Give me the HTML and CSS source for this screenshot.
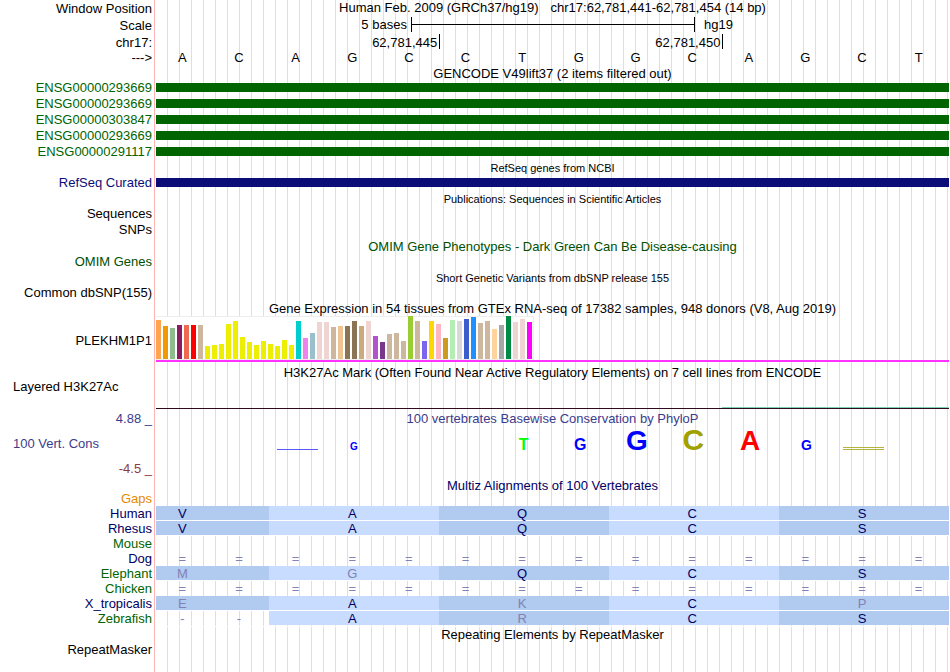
FILE: index.html
```
<!DOCTYPE html>
<html lang="en">
<head>
    <meta charset="UTF-8">
    <meta name="viewport" content="width=device-width, initial-scale=1.0">
    <title>Human chr17:62,781,441-62,781,454 Genome Browser</title>
    <link rel="stylesheet" href="styles.css">
</head>
<body>

<main class="browser">
    <!-- Ruler -->
    <div class="row ruler">
        <div class="label">Window Position</div>
        <div class="track position"><span>Human Feb. 2009 (GRCh37/hg19)</span><span>chr17:62,781,441-62,781,454 (14 bp)</span></div>
    </div>
    <div class="row ruler">
        <div class="label">Scale</div>
        <div class="track scale">
            <span class="scale-size">5 bases</span>
            <span class="scale-bar"></span>
            <span class="scale-db">hg19</span>
        </div>
    </div>
    <div class="row ruler">
        <div class="label">chr17:</div>
        <div class="track ticks">
            <span class="tick">62,781,445</span>
            <span class="tick">62,781,450</span>
        </div>
    </div>
    <div class="row bases-row">
        <div class="label">---&gt;</div>
        <div class="track bases">
            <span>A</span><span>C</span><span>A</span><span>G</span><span>C</span><span>C</span><span>T</span>
            <span>G</span><span>G</span><span>C</span><span>A</span><span>G</span><span>C</span><span>T</span>
        </div>
    </div>

    <!-- Genes -->
    <div class="row short">
        <div class="track title">GENCODE V49lift37 (2 items filtered out)</div>
    </div>
    <div class="row gencode">
        <div class="label">ENSG00000293669</div>
        <div class="track"><div class="gene"></div></div>
    </div>
    <div class="row gencode">
        <div class="label">ENSG00000293669</div>
        <div class="track"><div class="gene"></div></div>
    </div>
    <div class="row gencode">
        <div class="label">ENSG00000303847</div>
        <div class="track"><div class="gene"></div></div>
    </div>
    <div class="row gencode">
        <div class="label">ENSG00000293669</div>
        <div class="track"><div class="gene"></div></div>
    </div>
    <div class="row gencode">
        <div class="label">ENSG00000291117</div>
        <div class="track"><div class="gene"></div></div>
    </div>
    <div class="row short">
        <div class="track title small">RefSeq genes from NCBI</div>
    </div>
    <div class="row refseq">
        <div class="label">RefSeq Curated</div>
        <div class="track"><div class="gene"></div></div>
    </div>

    <!-- Literature and variants -->
    <div class="row short">
        <div class="track title small">Publications: Sequences in Scientific Articles</div>
    </div>
    <div class="row">
        <div class="label">Sequences</div>
    </div>
    <div class="row">
        <div class="label">SNPs</div>
    </div>
    <div class="row omim">
        <div class="track title">OMIM Gene Phenotypes - Dark Green Can Be Disease-causing</div>
    </div>
    <div class="row short omim">
        <div class="label">OMIM Genes</div>
    </div>
    <div class="row">
        <div class="track title small">Short Genetic Variants from dbSNP release 155</div>
    </div>
    <div class="row short">
        <div class="label">Common dbSNP(155)</div>
    </div>

    <!-- GTEx expression -->
    <div class="row">
        <div class="track title">Gene Expression in 54 tissues from GTEx RNA-seq of 17382 samples, 948 donors (V8, Aug 2019)</div>
    </div>
    <div class="row gtex">
        <div class="label">PLEKHM1P1</div>
        <div class="track gtex-track">
            <div class="gtex-chart" id="gtexChart"></div>
        </div>
    </div>

    <!-- Regulation -->
    <div class="row">
        <div class="track title">H3K27Ac Mark (Often Found Near Active Regulatory Elements) on 7 cell lines from ENCODE</div>
    </div>
    <div class="row histone">
        <div class="label label-left">Layered H3K27Ac</div>
        <div class="track"><div class="signal"></div></div>
    </div>

    <!-- Conservation -->
    <div class="row phylop">
        <div class="label axis">
            <span>4.88 _</span>
            <span class="axis-name">100 Vert. Cons</span>
            <span class="axis-min">-4.5 _</span>
        </div>
        <div class="track">
            <div class="phylop-title">100 vertebrates Basewise Conservation by PhyloP</div>
            <div class="logo">
                <span></span>
                <span></span>
                <span><i class="mark mark-g"></i></span>
                <span class="g size-10">G</span>
                <span></span>
                <span></span>
                <span class="t size-16">T</span>
                <span class="g size-16">G</span>
                <span class="g size-28">G</span>
                <span class="c size-30">C</span>
                <span class="a size-28">A</span>
                <span class="g size-14">G</span>
                <span><i class="mark mark-c"></i></span>
                <span></span>
            </div>
        </div>
    </div>
    <div class="row short multiz">
        <div class="track title">Multiz Alignments of 100 Vertebrates</div>
    </div>
    <div class="row gaps">
        <div class="label">Gaps</div>
    </div>
    <div class="row short multiz">
        <div class="label">Human</div>
        <div class="track codons">
            <span class="codon first">V</span><span class="codon light">A</span><span class="codon">Q</span><span class="codon light">C</span><span class="codon">S</span>
        </div>
    </div>
    <div class="row short multiz">
        <div class="label">Rhesus</div>
        <div class="track codons">
            <span class="codon first">V</span><span class="codon light">A</span><span class="codon">Q</span><span class="codon light">C</span><span class="codon">S</span>
        </div>
    </div>
    <div class="row short multiz other">
        <div class="label">Mouse</div>
    </div>
    <div class="row short multiz">
        <div class="label">Dog</div>
        <div class="track bases missing">
            <span>=</span><span>=</span><span>=</span><span>=</span><span>=</span><span>=</span><span>=</span>
            <span>=</span><span>=</span><span>=</span><span>=</span><span>=</span><span>=</span><span>=</span>
        </div>
    </div>
    <div class="row short multiz other">
        <div class="label">Elephant</div>
        <div class="track codons">
            <span class="codon first diff">M</span><span class="codon light diff">G</span><span class="codon">Q</span><span class="codon light">C</span><span class="codon">S</span>
        </div>
    </div>
    <div class="row short multiz other">
        <div class="label">Chicken</div>
        <div class="track bases missing">
            <span>=</span><span>=</span><span>=</span><span>=</span><span>=</span><span>=</span><span>=</span>
            <span>=</span><span>=</span><span>=</span><span>=</span><span>=</span><span>=</span><span>=</span>
        </div>
    </div>
    <div class="row short multiz">
        <div class="label">X_tropicalis</div>
        <div class="track codons">
            <span class="codon first diff">E</span><span class="codon light">A</span><span class="codon diff">K</span><span class="codon light">C</span><span class="codon diff">P</span>
        </div>
    </div>
    <div class="row short multiz other">
        <div class="label">Zebrafish</div>
        <div class="track codons">
            <span class="gap">-</span><span class="gap">-</span><span class="codon light">A</span><span class="codon diff">R</span><span class="codon light">C</span><span class="codon">S</span>
        </div>
    </div>

    <!-- Repeats -->
    <div class="row">
        <div class="track title">Repeating Elements by RepeatMasker</div>
    </div>
    <div class="row short">
        <div class="label">RepeatMasker</div>
    </div>
</main>

<script>
    // [bar height, tissue color]
    const tissues = [
        [39, '#ffa54f'], [33, '#ee9a00'], [31, '#8fbc8f'], [34, '#8b1c62'], [34, '#ee6a50'], [34, '#ff0000'],
        [34, '#cdb79e'], [13, '#eeee00'], [14, '#eeee00'], [15, '#eeee00'], [35, '#eeee00'], [38, '#eeee00'],
        [22, '#eeee00'], [17, '#eeee00'], [14, '#eeee00'], [18, '#eeee00'], [15, '#eeee00'], [13, '#eeee00'],
        [19, '#eeee00'], [14, '#eeee00'], [38, '#00cdcd'], [21, '#ee82ee'], [26, '#9ac0cd'], [37, '#eed5d2'],
        [37, '#eed5d2'], [32, '#cdb79e'], [33, '#eec591'], [33, '#8b7355'], [38, '#8b7355'], [33, '#cdaa7d'],
        [38, '#eed5d2'], [23, '#b452cd'], [17, '#7a378b'], [25, '#cdb79e'], [26, '#cdb79e'], [18, '#cdb79e'],
        [43, '#9acd32'], [38, '#cdb79e'], [18, '#7a67ee'], [38, '#ffd700'], [35, '#ffb6c1'], [21, '#cd9b1d'],
        [39, '#b4eeb4'], [38, '#d9d9d9'], [40, '#3a5fcd'], [42, '#1e90ff'], [36, '#cdb79e'], [38, '#cdb79e'],
        [30, '#ffd39b'], [34, '#a6a6a6'], [43, '#008b45'], [37, '#eed5d2'], [40, '#eed5d2'], [37, '#ff00ff']
    ];
    const gtexChart = document.getElementById('gtexChart');

    tissues.forEach(([height, color]) => {
        const bar = document.createElement('div');
        bar.className = 'bar';
        bar.style.height = height + 'px';
        bar.style.backgroundColor = color;
        gtexChart.appendChild(bar);
    });
</script>

</body>
</html>
```
FILE: styles.css
```
* {
    box-sizing: border-box;
}
body {
    margin: 0;
    font-family: "Liberation Sans", Arial, sans-serif;
    font-size: 13px;
    color: #000;
    background-color: #fff;
}
/* label column with its red edge, then a guideline every 12px */
.browser {
    min-height: 100vh;
    padding-right: 1px;
    background-image:
        linear-gradient(to right, #fff 154px, #ffb4b4 154px, #ffb4b4 155px, #fff 155px),
        linear-gradient(to right, #dcdcf8 1px, transparent 1px);
    background-size: 156px 100%, 12px 100%;
    background-position: 0 0, 11px 0;
    background-repeat: no-repeat, repeat;
}
.row {
    display: grid;
    grid-template-columns: 156px minmax(0, 1fr);
    height: 16px;
    line-height: 16px;
    white-space: nowrap;
}
.short {
    height: 15px;
    line-height: 15px;
}
.label {
    grid-column: 1;
    padding-right: 4px;
    text-align: right;
}
.label-left {
    padding-left: 13px;
    text-align: left;
}
.track {
    grid-column: 2;
    min-width: 0;
}
.title {
    padding-top: 1px;
    text-align: center;
}
.small {
    font-size: 11px;
}

/* ruler */
.ruler {
    height: 17px;
    line-height: 17px;
}
.position {
    display: flex;
    justify-content: center;
    gap: 12px;
    line-height: 16px;
}
.scale {
    display: grid;
    grid-template-columns: 9fr 10fr 9fr;
    line-height: 16px;
}
.scale-size {
    padding-right: 4px;
    text-align: right;
}
.scale-bar {
    height: 15px;
    margin-right: -1px;
    border: solid #000;
    border-width: 0 1px;
    background: linear-gradient(#000, #000) center / 100% 1px no-repeat;
}
.scale-db {
    padding-left: 10px;
}
.ticks {
    display: grid;
    grid-template-columns: 5fr 5fr 4fr;
}
.tick {
    height: 15px;
    margin-right: -1px;
    padding-right: 2px;
    border-right: 1px solid #000;
    text-align: right;
}
.bases-row {
    height: 14px;
    line-height: 13px;
}
.bases,
.logo {
    display: grid;
    grid-template-columns: repeat(14, minmax(0, 1fr));
    text-align: center;
}
.bases span {
    padding-right: 4px;
}

/* genes */
.gencode {
    color: #006400;
}
.refseq {
    color: #0c0c78;
}
.gene {
    height: 9px;
    margin-top: 3px;
    background-color: currentColor;
}
.omim {
    color: #005000;
}

/* expression */
.gtex {
    height: 48px;
    line-height: 50px;
}
.gtex-track {
    height: 46px;
    border-bottom: 2px solid #ff32ff;
}
.gtex-chart {
    display: flex;
    align-items: flex-end;
    gap: 2px;
    width: max-content;
    height: 44px;
    padding-right: 1px;
    background-color: #fff;
    border: solid #eee;
    border-width: 0 1px 1px 0;
    box-shadow: inset 0 1px #eee;
}
.bar {
    width: 5px;
}

/* histone marks */
.histone {
    height: 31px;
    line-height: 14px;
}
.signal {
    height: 2px;
    margin-top: 27px;
    border-bottom: 1px solid #320a1e;
    background: linear-gradient(#78d2b4, #78d2b4) right / 28.6% 1px no-repeat;
}

/* conservation */
.phylop {
    height: 66px;
    color: #3c3c8c;
}
.phylop-title {
    text-align: center;
}
.axis {
    display: flex;
    flex-direction: column;
    justify-content: space-between;
}
.axis-name {
    padding-left: 13px;
    text-align: left;
}
.axis-min {
    color: #8c3c3c;
}
.logo {
    align-items: baseline;
    height: 24px;
    padding-right: 1px;
    line-height: 26px;
    font-weight: bold;
}
.g {
    color: #0000ff;
}
.t {
    color: #00ff00;
}
.c {
    color: #a0a000;
}
.a {
    color: #ff0000;
}
.size-10 {
    font-size: 10px;
}
.size-14 {
    font-size: 14px;
}
.size-16 {
    font-size: 16px;
}
.size-28 {
    font-size: 28px;
}
.size-30 {
    font-size: 30px;
}
.mark {
    display: inline-block;
    width: 41px;
}
.mark-g {
    height: 1px;
    background-color: #5a5aff;
}
.mark-c {
    height: 3px;
    border: solid #b4b43c;
    border-width: 1px 0;
}

/* alignments */
.multiz {
    color: #000064;
}
.other .label {
    color: #006400;
}
.gaps {
    height: 14px;
    line-height: 14px;
    color: #e68a00;
}
.codons {
    display: grid;
    grid-template-columns: repeat(14, minmax(0, 1fr));
    border-bottom: 1px solid #fff;
    text-align: center;
}
.codon {
    grid-column: span 3;
    height: 14px;
    padding-right: 4px;
    background-color: #b0caf0;
}
.first {
    grid-column: span 2;
    padding-right: calc(50% + 4px);
}
.light {
    background-color: #c8dcff;
}
.gap {
    padding-right: 4px;
}
.diff,
.gap,
.missing {
    color: #8282b4;
}
```
